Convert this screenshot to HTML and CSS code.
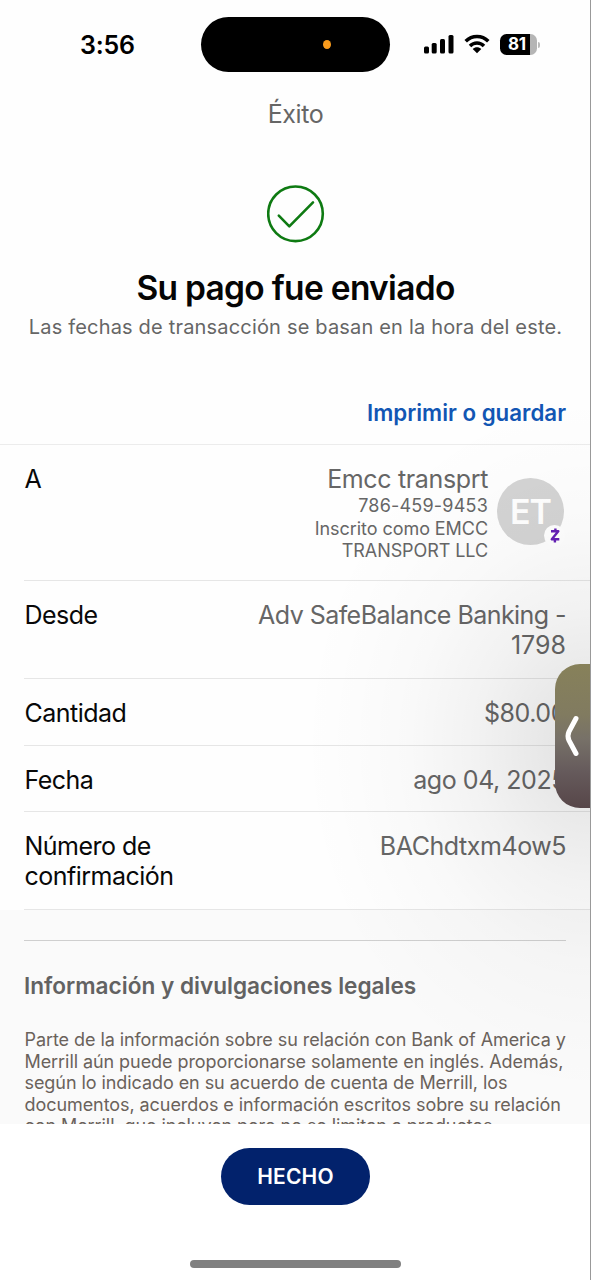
FILE: index.html
```html
<!DOCTYPE html>
<html lang="es">
<head>
<meta charset="utf-8">
<meta name="viewport" content="width=device-width">
<title>Éxito</title>
<link rel="stylesheet" href="styles.css">
</head>
<body>
<div class="screen">
  <header class="status">
    <span class="time">3:56</span>
    <div class="island"><span class="dot"></span></div>
    <div class="indicators">
      <svg class="signal" width="31" height="20" viewBox="0 0 31 20"><rect x="0" y="12.500" width="5" height="7" rx="1.500"/><rect x="7.700" y="9" width="5" height="10.500" rx="1.500"/><rect x="16" y="5" width="5" height="14.500" rx="1.500"/><rect x="24.500" y="1" width="5" height="18.500" rx="1.500"/></svg>
      <svg class="wifi" width="26" height="20" viewBox="0 0 26 20"><g fill="none" stroke="#000" stroke-width="3.500"><path d="M1.700 7.300C8 .8 18 .8 24.300 7.300"/><path d="M6 11.900c4-4 10-4 14 0"/></g><path d="M8.700 15c2.400-2.300 6.200-2.300 8.600 0L13 19.300z"/></svg>
      <div class="battery"><span class="level">81</span></div>
      <span class="cap"></span>
    </div>
  </header>
  <div class="title">Éxito</div>
  <section class="hero">
    <svg class="check" width="58" height="58" viewBox="0 0 58 58"><circle cx="28.500" cy="28.800" r="27.300"/><path d="M11.800 30.600 22.300 41.300 46 17.300"/></svg>
    <h1 class="headline">Su pago fue enviado</h1>
    <p class="subhead">Las fechas de transacción se basan en la hora del este.</p>
    <a class="print">Imprimir o guardar</a>
  </section>
  <main class="details">
    <div class="row payee">
      <span class="label">A</span>
      <div class="person">
        <div class="who">
          <span class="name">Emcc transprt</span>
          <span class="phone">786-459-9453</span>
          <span class="enrolled">Inscrito como EMCC</span>
          <span class="company">TRANSPORT LLC</span>
        </div>
        <div class="avatar"><span class="initials">ET</span>
          <span class="badge"><svg width="12" height="17" viewBox="0 0 12 17"><path d="M2 4.200h7.300L2.800 12.300h7.500M6.400 1.500v2.700M5.900 12.300v3.200"/></svg></span>
        </div>
      </div>
    </div>
    <div class="row from"><span class="label">Desde</span><span class="value account">Adv SafeBalance Banking -<br><span class="digits">1798</span></span></div>
    <div class="row"><span class="label">Cantidad</span><span class="value">$80.00</span></div>
    <div class="row date"><span class="label">Fecha</span><span class="value">ago 04, 2025</span></div>
    <div class="row confirm"><span class="label">Número de<br>confirmación</span><span class="value">BAChdtxm4ow5</span></div>
  </main>
  <section class="legal">
    <h2 class="legal-title">Información y divulgaciones legales</h2>
    <p class="legal-text">Parte de la información sobre su relación con Bank of America y<br>Merrill aún puede proporcionarse solamente en inglés. Además,<br>según lo indicado en su acuerdo de cuenta de Merrill, los<br>documentos, acuerdos e información escritos sobre su relación<br>con Merrill, que incluyen pero no se limitan a productos</p>
  </section>
  <footer class="actions">
    <button class="done">HECHO</button>
    <span class="home"></span>
  </footer>
  <div class="glow"></div>
  <div class="tab"><svg width="16" height="42" viewBox="0 0 16 42"><path d="M12 3.500 5 16.500Q3 21 5 25.500L12 38.500"/></svg></div>
  <div class="edge"></div>
</div>
</body>
</html>
```
FILE: styles.css
```css
* { box-sizing: border-box; }
body { margin: 0; background: #fff; font-family: Inter, "Liberation Sans", sans-serif; }
.screen { position: relative; width: 591px; height: 1280px; overflow: hidden; background: #fefefe; display: flex; flex-direction: column; }
.status { height: 89px; flex: none; display: grid; grid-template-columns: 201px 189px 201px; align-items: center; }
.time { font-size: 25px; font-weight: 600; padding-left: 80px; letter-spacing: -0.2px; }
.island { height: 55px; border-radius: 28px; background: #000; display: flex; align-items: center; padding-left: 122px; }
.dot { width: 8px; height: 9px; border-radius: 50%; background: #f99b1c; }
.indicators { display: flex; align-items: center; padding-left: 34px; }
.indicators svg { position: relative; top: -1px; }
.wifi { margin-left: 9px; }
.battery { margin-left: 10px; width: 37px; height: 21px; border-radius: 6.500px; background: linear-gradient(90deg, #000 81%, #b5b5b5 81%); display: flex; align-items: center; }
.level { color: #fff; font-size: 17px; font-weight: 700; line-height: 21px; padding-left: 8px; letter-spacing: -0.2px; }
.cap { width: 2px; height: 6px; background: #bbb; border-radius: 0 2px 2px 0; margin-left: 1px; }
.title { flex: none; height: 52px; text-align: center; font-size: 25px; line-height: 51px; letter-spacing: -0.4px; color: #666; }
.hero { flex: none; height: 303px; padding-top: 44px; display: flex; flex-direction: column; align-items: center; }
.check { flex: none; fill: none; stroke: #0e7a12; stroke-width: 2.600; stroke-linecap: round; stroke-linejoin: round; }
.headline { margin: 25px 0 0; font-size: 33.500px; line-height: 40px; font-weight: 600; letter-spacing: -0.7px; color: #050505; white-space: nowrap; }
.subhead { margin: 7px 0 0; font-size: 20px; line-height: 24px; letter-spacing: 0.180px; color: #666; white-space: nowrap; }
.print { align-self: flex-end; margin: 60px 25px 0 0; font-size: 22.300px; line-height: 28px; font-weight: 600; color: #1256b4; white-space: nowrap; }
.details { flex: none; border-top: 1px solid #ececec; }
.row { height: 67px; margin-left: 24px; padding: 19px 25px 0 0; border-bottom: 1px solid #e6e6e6; display: flex; justify-content: space-between; font-size: 25px; line-height: 30px; white-space: nowrap; }
.label { color: #080808; letter-spacing: -0.520px; padding-left: 0.500px; }
.value { color: #666; text-align: right; letter-spacing: -0.450px; }
.payee { height: 136px; }
.person { display: flex; gap: 9px; color: #666; margin-right: 2px; }
.who { display: flex; flex-direction: column; align-items: flex-end; font-size: 18px; line-height: 21px; }
.name { font-size: 25px; line-height: 30px; letter-spacing: -0.350px; }
.phone { line-height: 24px; letter-spacing: 0.200px; }
.enrolled { line-height: 22px; letter-spacing: -0.060px; }
.company { letter-spacing: -0.080px; }
.avatar { position: relative; width: 67px; height: 67px; margin-top: 14px; border-radius: 50%; background: #d4d4d4; color: #fff; display: flex; align-items: center; justify-content: center; }
.initials { font-size: 34px; font-weight: 600; letter-spacing: -1px; }
.badge { position: absolute; left: 47px; top: 47px; width: 21px; height: 21px; border-radius: 50%; background: #fff; display: flex; align-items: center; justify-content: center; }
.badge path { fill: none; stroke: #6420b5; stroke-width: 2.400; stroke-linejoin: round; }
.from { height: 98px; }
.from .account { letter-spacing: -0.550px; }
.digits { letter-spacing: 0; }
.date { height: 66px; }
.confirm { height: 98px; }
.legal { flex: none; height: 214px; overflow: hidden; padding: 30px 25px 0 24px; background: #fafafa; }
.legal-title { margin: 0; padding-top: 31px; border-top: 1px solid #cfcfcf; font-size: 22.600px; line-height: 28px; font-weight: 600; color: #626262; white-space: nowrap; }
.legal-text { margin: 29px 0 0; padding-left: 0.500px; font-size: 18px; line-height: 21.500px; letter-spacing: -0.070px; color: #6a625b; white-space: nowrap; }
.actions { position: relative; z-index: 2; flex: 1; background: #fff; display: flex; flex-direction: column; align-items: center; padding-top: 24px; }
.done { width: 149px; height: 57px; border: 0; border-radius: 29px; background: #02226c; color: #fff; font: 600 21px/57px Inter, sans-serif; padding: 0; letter-spacing: 0.200px; }
.home { width: 211px; height: 8px; border-radius: 4px; margin-top: 55px; background: #808080; }
.glow { position: absolute; right: 0; top: 400px; width: 310px; height: 724px; background: radial-gradient(ellipse 290px 350px at 310px 345px, rgba(0,0,0,.12) 0, rgba(0,0,0,.085) 18%, rgba(0,0,0,.047) 40%, rgba(0,0,0,.02) 63%, rgba(0,0,0,.006) 83%, transparent 100%); }
.tab { position: absolute; right: 0; top: 664px; width: 36px; height: 144px; border-radius: 25px 0 0 25px; background: linear-gradient(#87815a 0, #817b60 35%, #777168 52%, #665b5c 74%, #574649 100%); display: flex; align-items: center; padding-left: 9px; }
.tab path { fill: none; stroke: #fff; stroke-width: 5; stroke-linecap: round; }
.edge { position: absolute; z-index: 3; right: 0; top: 0; width: 1px; height: 1280px; background: #999; }
```
